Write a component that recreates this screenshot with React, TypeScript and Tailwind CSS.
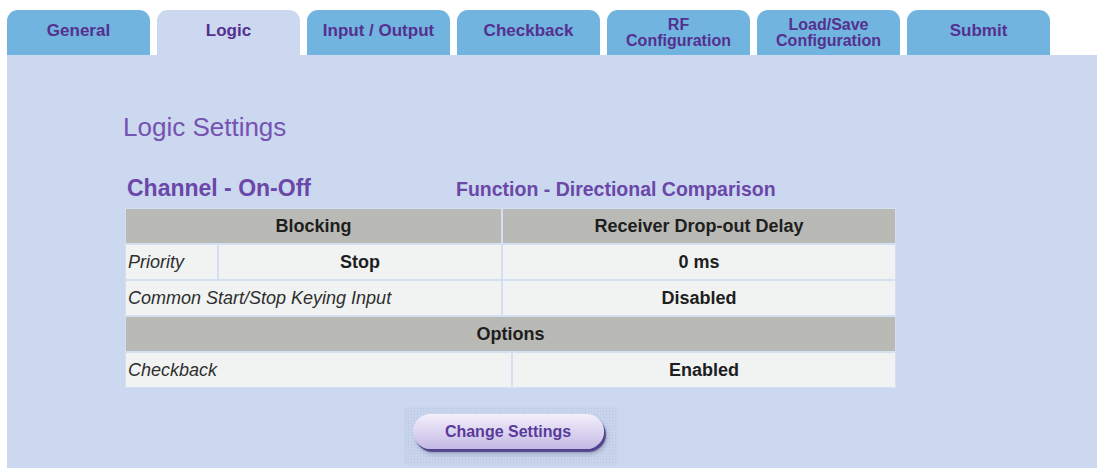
import React from "react";

type Tab = { label: string[]; active?: boolean };

const tabs: Tab[] = [
  { label: ["General"] },
  { label: ["Logic"], active: true },
  { label: ["Input / Output"] },
  { label: ["Checkback"] },
  { label: ["RF", "Configuration"] },
  { label: ["Load/Save", "Configuration"] },
  { label: ["Submit"] },
];

const TabButton = ({ tab }: { tab: Tab }) => (
  <div
    className={`flex h-[45px] w-[143px] flex-col items-center justify-center rounded-t-[11px] font-bold text-[#55308f] ${
      tab.active ? "bg-[#cbd8ef]" : "bg-[#70b4df]"
    } ${tab.label.length > 1 ? "text-[16px] leading-[16px]" : "pb-[3px] text-[17px] leading-[20px]"}`}
  >
    {tab.label.map((line) => (
      <span key={line}>{line}</span>
    ))}
  </div>
);

const headCell = "flex h-[34px] items-center justify-center bg-[#b9b9b5] text-[18px] font-bold text-[#1e1e1e]";
const valueCell = "flex h-[34px] items-center justify-center bg-[#f1f3f3] text-[18px] font-bold text-[#1e1e1e]";
const labelCell = "flex h-[34px] items-center bg-[#f1f3f3] pl-[2px] text-[18px] italic text-[#2e2e2e]";

export default function App() {
  return (
    <div className="h-[468px] w-[1097px] overflow-hidden bg-white font-['Liberation_Sans',Arial,sans-serif]">
      <div className="flex gap-[7px] pl-[7px] pt-[10px]">
        {tabs.map((t) => (
          <TabButton key={t.label.join(" ")} tab={t} />
        ))}
      </div>

      <div className="ml-[7px] h-[413px] bg-[#cbd8ef] pl-[118px] pt-[58px]">
        <div className="w-[771px]">
          <h1 className="-ml-[2px] text-[26px] leading-[28px] text-[#7652b2]">Logic Settings</h1>

          <div className="mt-[34px] flex items-baseline font-bold text-[#6a47a8]">
            <span className="ml-[2px] w-[329px] text-[23px] leading-[26px]">Channel - On-Off</span>
            <span className="text-[19.5px]">Function - Directional Comparison</span>
          </div>

          <div className="mt-[4px] flex flex-col gap-[2px] bg-[#d4dff2] p-px">
            <div className="flex gap-[2px]">
              <div className={`${headCell} w-[375px]`}>Blocking</div>
              <div className={`${headCell} flex-1`}>Receiver Drop-out Delay</div>
            </div>
            <div className="flex gap-[2px]">
              <div className={`${labelCell} w-[91px]`}>Priority</div>
              <div className={`${valueCell} w-[282px]`}>Stop</div>
              <div className={`${valueCell} flex-1`}>0 ms</div>
            </div>
            <div className="flex gap-[2px]">
              <div className={`${labelCell} w-[375px] text-[17px]`}>Common Start/Stop Keying Input</div>
              <div className={`${valueCell} flex-1`}>Disabled</div>
            </div>
            <div className={headCell}>Options</div>
            <div className="flex gap-[2px]">
              <div className={`${labelCell} w-[385px]`}>Checkback</div>
              <div className={`${valueCell} flex-1`}>Enabled</div>
            </div>
          </div>

          <div className="mt-[19px] flex justify-center">
            <div className="h-[58px] w-[214px] bg-[#c7d4eb] bg-[radial-gradient(#b8c6e0_1px,transparent_1px)] bg-[length:3px_3px] pl-[9px] pt-[7px]">
              <button
                type="button"
                className="flex h-[35px] w-[191px] items-center justify-center rounded-full bg-gradient-to-b from-[#f3f0fb] via-[#dcd5f0] to-[#c3b8e3] text-[16px] font-bold text-[#5a3a9a] shadow-[2px_3px_1px_#54438d,3px_5px_4px_rgba(90,90,120,0.35)]"
              >
                Change Settings
              </button>
            </div>
          </div>
        </div>
      </div>
    </div>
  );
}
